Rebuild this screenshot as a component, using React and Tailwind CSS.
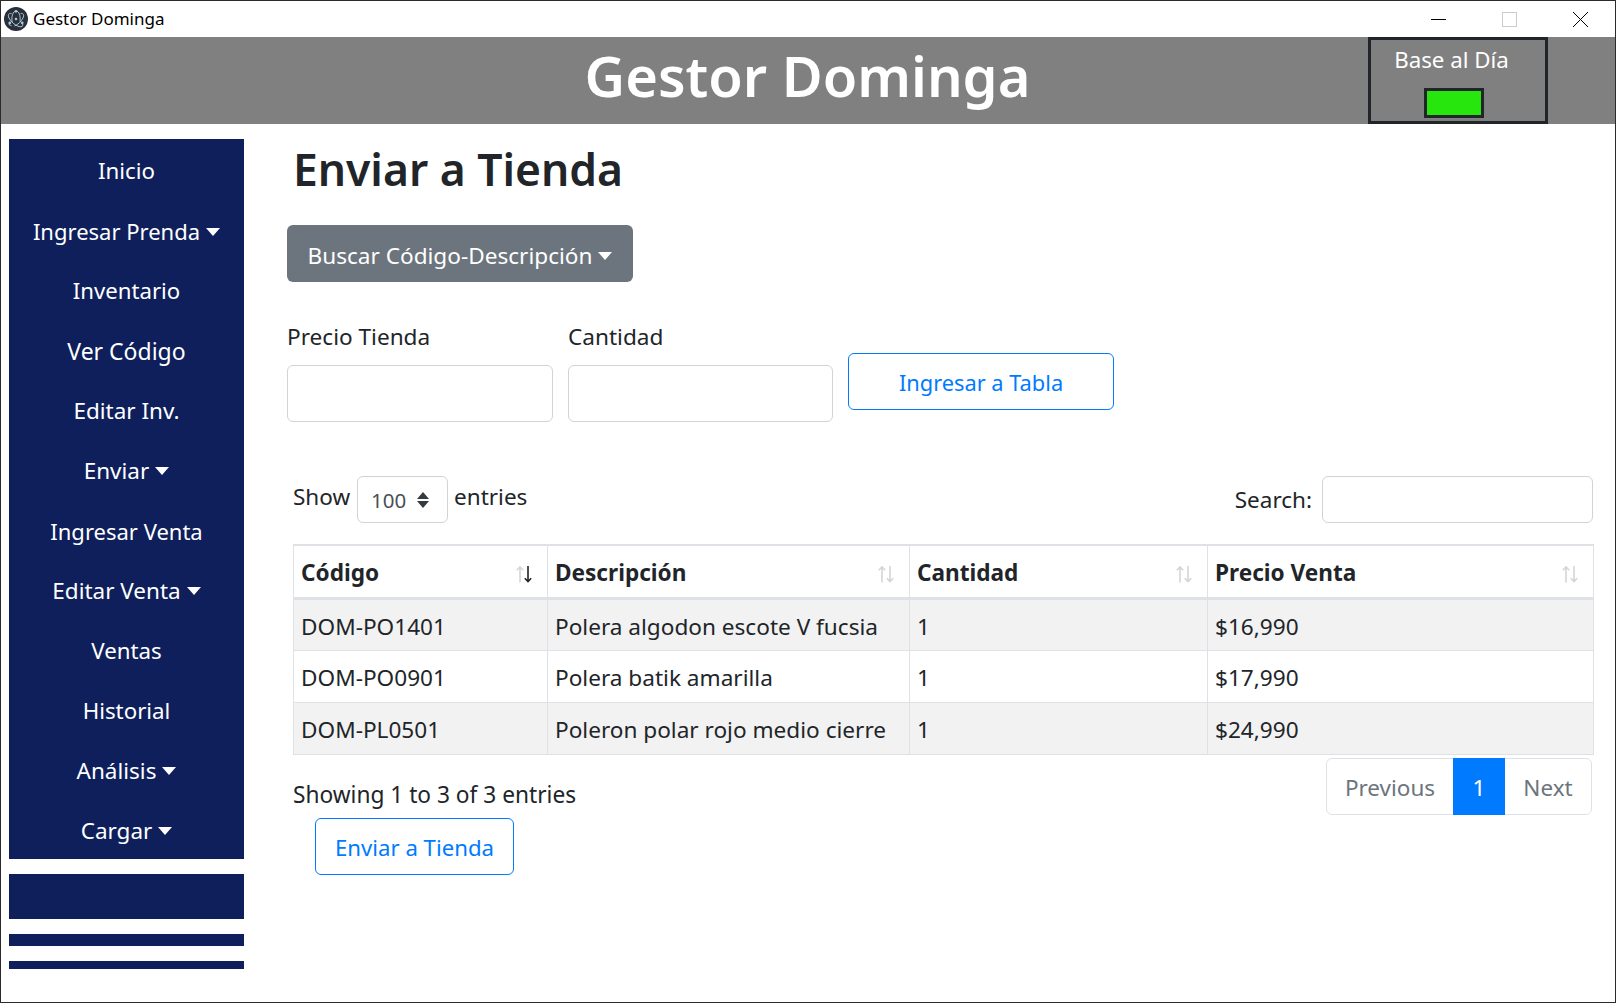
import React from "react";

const NAVY = "bg-[#0e1f5b]";
const items = [
  ["Inicio", false, "text-[22.3px]"], ["Ingresar Prenda", true, "text-[22px]"], ["Inventario", false, "text-[22.2px]"], ["Ver Código", false, "text-[23px]"],
  ["Editar Inv.", false, "text-[22.5px]"], ["Enviar", true, "text-[22.5px]"], ["Ingresar Venta", false, "text-[22px]"], ["Editar Venta", true, "text-[22.5px]"],
  ["Ventas", false, "text-[22.3px]"], ["Historial", false, "text-[22.3px]"], ["Análisis", true, "text-[22.5px]"], ["Cargar", true, "text-[22.5px]"],
];
const rows = [
  ["DOM-PO1401", "Polera algodon escote V fucsia", "1", "$16,990"],
  ["DOM-PO0901", "Polera batik amarilla", "1", "$17,990"],
  ["DOM-PL0501", "Poleron polar rojo medio cierre", "1", "$24,990"],
];
const font = { fontFamily: "'Noto Sans', sans-serif" };

function Caret({ color = "border-t-white" }) {
  return <span className={`inline-block ml-[6px] align-[4px] w-0 h-0 border-x-[7px] border-x-transparent border-t-[8px] ${color}`} />;
}

function SortIcon({ active }) {
  return (
    <svg width="18" height="18" viewBox="0 0 18 18" className="shrink-0 mt-[2px]">
      <g fill="none" strokeWidth="1.6">
        <path d="M5 17.5V2M1.8 5.2L5 2l3.2 3.2" stroke="#d4d5d6" />
        <path d="M13 1v15.5M9.8 13.3l3.2 3.2 3.2-3.2" stroke={active ? "#212529" : "#d4d5d6"} />
      </g>
    </svg>
  );
}

function Field({ label, width }) {
  return (
    <div className={`flex flex-col ${width}`}>
      <label className="text-[22.6px] leading-[36px] mb-[10px] text-[#212529]">{label}</label>
      <input className="h-[57px] border border-[#ced4da] rounded-[6px] bg-white" />
    </div>
  );
}

export default function App() {
  return (
    <div className="w-[1616px] h-[1003px] bg-white border border-[#2b2b2b] flex flex-col overflow-hidden text-[#212529]" style={font}>
      <div className="h-[36px] flex items-center shrink-0 bg-white">
        <svg width="24" height="24" viewBox="0 0 24 24" className="ml-[3px] mr-[5px]">
          <circle cx="12" cy="12" r="12" fill="#2b2e3b" />
          <g fill="none" stroke="#a9cbd6" strokeWidth="1">
            <path d="M7.5 6.5C4.5 6 3.6 8 5 11c1.8 3.6 6 7.5 10 8.6 3 .8 4.3-.6 3.6-3" />
            <path d="M16.5 6.5C19.5 6 20.4 8 19 11c-1.6 3.2-5 6.6-8.5 8" />
            <path d="M8.2 15C7 10 9 4 12 4s4.8 5 4 10.5" />
            <path d="M6 15.5c-1.4 1.4-1 3 1.5 3.2" />
          </g>
          <circle cx="12" cy="4.3" r="1.4" fill="#a9cbd6" />
          <circle cx="5.8" cy="16" r="1.4" fill="#a9cbd6" />
          <circle cx="18.2" cy="15.8" r="1.4" fill="#a9cbd6" />
          <circle cx="12" cy="12" r="1.3" fill="#a9cbd6" />
        </svg>
        <span className="text-[17px] text-black">Gestor Dominga</span>
        <div className="ml-auto flex items-center h-full">
          <svg width="46" height="36" viewBox="0 0 46 36"><path d="M15 18.5h15" stroke="#000" strokeWidth="1" /></svg>
          <svg width="46" height="36" viewBox="0 0 46 36" className="ml-[24px]"><rect x="16.5" y="11.5" width="14" height="14" fill="none" stroke="#cccccc" /></svg>
          <svg width="46" height="36" viewBox="0 0 46 36" className="ml-[25px] mr-[12px]"><path d="M16 11l15 15M31 11L16 26" stroke="#000" strokeWidth="1" /></svg>
        </div>
      </div>

      <header className="h-[87px] shrink-0 bg-[#808080] flex items-center relative">
        <h1 className="w-full text-center text-white text-[56px] font-semibold leading-none pb-[12px] pr-[1px]">Gestor Dominga</h1>
        <div className="absolute left-[1367px] top-0 w-[180px] h-[87px] border-[3px] border-[#212529]">
          <div className="w-[161px] flex flex-col items-center">
            <span className="text-white text-[22.3px] leading-[36px] mt-[2px]">Base al Día</span>
          </div>
          <div className="ml-[53px] mt-[10px] w-[60px] h-[30px] border-[3px] border-[#212529] bg-[#26e60d]" />
        </div>
      </header>

      <div className="flex-1 flex min-h-0">
        <aside className="w-[235px] ml-[8px] mt-[15px] shrink-0 flex flex-col">
          <nav className={`${NAVY} h-[720px] flex flex-col`}>
            {items.map(([t, c, size]) => (
              <div key={t} className={`h-[60px] flex items-center justify-center text-white pt-[4px] ${size}`}>
                <span>{t}{c && <Caret />}</span>
              </div>
            ))}
          </nav>
          <div className={`${NAVY} h-[45px] mt-[15px]`} />
          <div className={`${NAVY} h-[12px] mt-[15px]`} />
          <div className={`${NAVY} h-[8px] mt-[15px]`} />
        </aside>

        <main className="flex-1 min-w-0 pl-[43px] pr-[22px] flex flex-col">
          <h2 className="text-[44.4px] font-semibold leading-[54px] ml-[6px] mt-[18px]">Enviar a Tienda</h2>
          <button className="mt-[29px] self-start h-[57px] w-[346px] rounded-[6px] bg-[#6c757d] text-white text-[22.6px] flex items-center justify-center pt-[4px]">
            <span>Buscar Código-Descripción<Caret /></span>
          </button>
          <div className="mt-[37px] flex items-end gap-[15px]">
            <Field label="Precio Tienda" width="w-[266px]" />
            <Field label="Cantidad" width="w-[265px]" />
            <button className="w-[266px] h-[57px] mb-[12px] border border-[#007bff] rounded-[6px] text-[#007bff] text-[21.8px] pt-[3px]">Ingresar a Tabla</button>
          </div>

          <div className="mt-[54px] flex justify-between pl-[6px] h-[48px]">
            <div className="flex items-start text-[22.5px] leading-[42px]">
              <span>Show</span>
              <div className="ml-[7px] w-[91px] h-[47px] border border-[#ced4da] rounded-[6px] flex items-center pl-[13px] text-[20.5px] text-[#495057]">
                <span className="mt-[1px]">100</span>
                <svg width="12" height="16" viewBox="0 0 12 16" className="ml-[11px] mt-[1px]"><path d="M6 0l6 7H0zM6 16L0 9h12z" fill="#343a40" /></svg>
              </div>
              <span className="ml-[6px]">entries</span>
            </div>
            <div className="flex items-start text-[22.5px]">
              <span className="mt-[7px]">Search:</span>
              <input className="ml-[10px] w-[271px] h-[47px] border border-[#ced4da] rounded-[6px]" />
            </div>
          </div>

          <div className="mt-[20px] ml-[6px]">
            <table className="w-[1300px] table-fixed border-collapse text-[22.6px]">
              <colgroup>
                <col className="w-[254px]" /><col className="w-[362px]" /><col className="w-[298px]" /><col className="w-[386px]" />
              </colgroup>
              <thead>
                <tr className="h-[53px]">
                  {["Código", "Descripción", "Cantidad", "Precio Venta"].map((h, i) => (
                    <th key={h} className="border border-[#dee2e6] border-t-2 border-b-[3px] px-[7px] text-left font-bold pt-[4px]">
                      <div className="flex items-center justify-between pr-[7px]"><span>{h}</span><SortIcon active={i === 0} /></div>
                    </th>
                  ))}
                </tr>
              </thead>
              <tbody>
                {rows.map((r, i) => (
                  <tr key={r[0]} className={`h-[52px] ${i % 2 === 0 ? "bg-[#f2f2f2]" : "bg-white"}`}>
                    {r.map((c, j) => <td key={j} className="border border-[#dee2e6] px-[7px] pt-[4px] whitespace-nowrap">{c}</td>)}
                  </tr>
                ))}
              </tbody>
            </table>
          </div>

          <div className="ml-[6px] flex justify-between w-[1300px]">
            <span className="text-[22.7px] leading-[36px] mt-[22px]">Showing 1 to 3 of 3 entries</span>
            <div className="mt-[3px] mr-[1px] h-[57px] flex text-[22.5px] border border-[#dee2e6] rounded-[6px]">
              <span className="w-[126px] flex items-center justify-center text-[#6c757d] pt-[3px]">Previous</span>
              <span className="w-[52px] -my-px flex items-center justify-center bg-[#007bff] text-white pt-[3px]">1</span>
              <span className="w-[86px] flex items-center justify-center text-[#6c757d] pt-[3px]">Next</span>
            </div>
          </div>
          <button className="ml-[28px] mt-[3px] self-start w-[199px] h-[57px] border border-[#007bff] rounded-[6px] text-[#007bff] text-[22.2px] pt-[3px]">Enviar a Tienda</button>
        </main>
      </div>
    </div>
  );
}
